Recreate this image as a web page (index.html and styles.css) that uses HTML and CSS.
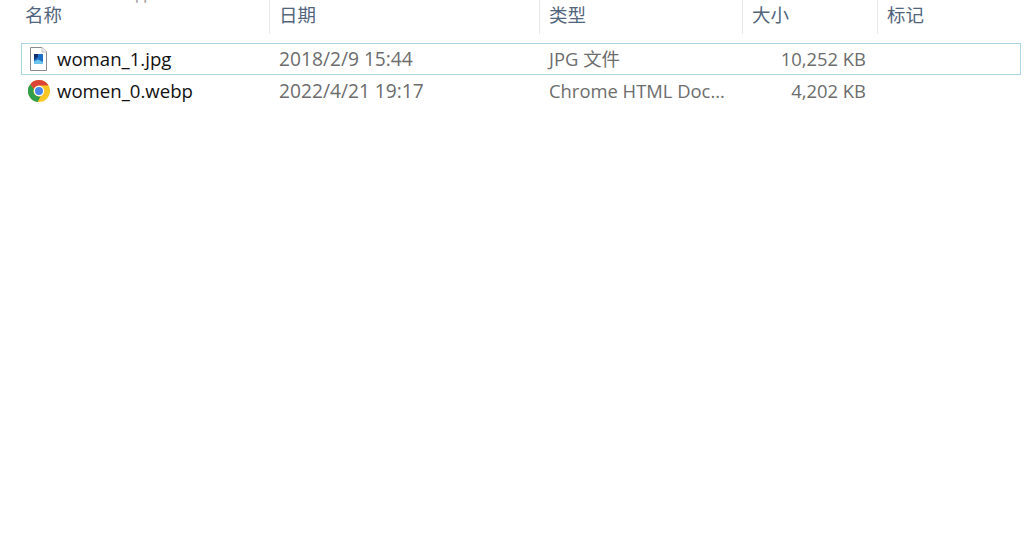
FILE: index.html
```html
<!DOCTYPE html>
<html lang="en">
<head>
    <meta charset="UTF-8">
    <meta name="viewport" content="width=device-width, initial-scale=1.0">
    <title>File list</title>
    <link rel="stylesheet" href="styles.css">
</head>

<body>
    <div class="cut-text">件</div>

    <!-- Column headers -->
    <div class="file-header">
        <div class="head-cell head-name">名称</div>
        <div class="head-cell">日期</div>
        <div class="head-cell">类型</div>
        <div class="head-cell">大小</div>
        <div class="head-cell head-last">标记</div>
    </div>

    <!-- Files -->
    <div class="file-list">
        <div class="file-row selected">
            <div class="name-cell">
                <svg class="file-icon" width="22" height="26" viewBox="0 0 22 26">
                    <path d="M2.5 1.5H14L18.5 6V24.5H2.5Z" fill="#fff" stroke="#8a8a8e"/>
                    <path d="M14 1.5V6H18.5" fill="#f1f1f1" stroke="#c4c4c8"/>
                    <rect x="6" y="8" width="9" height="10" fill="#1c6fc4"/>
                    <path d="M6 8H10V11L6 14Z" fill="#12306f"/>
                    <path d="M6 18V15.5L10 13.5L15 16V18Z" fill="#6cc3ec"/>
                </svg>
                <span>woman_1.jpg</span>
            </div>
            <div class="cell date-cell">2018/2/9 15:44</div>
            <div class="cell type-cell">JPG 文件</div>
            <div class="cell size-cell">10,252 KB</div>
        </div>
        <div class="file-row">
            <div class="name-cell">
                <svg class="chrome-icon" width="22" height="22" viewBox="0 0 22 22">
                    <circle cx="11" cy="11" r="11" fill="#f9c623"/>
                    <path d="M11 0A11 11 0 0 1 20.5 5.5H11A5.5 5.5 0 0 0 5.8 9.2L2.3 4.2A11 11 0 0 1 11 0Z" fill="#dc4437"/>
                    <path d="M2.3 4.2L5.8 9.2A5.5 5.5 0 0 0 12.6 16.3L9.6 21.9A11 11 0 0 1 2.3 4.2Z" fill="#2f9e4c"/>
                    <circle cx="11" cy="11" r="5.2" fill="#fff"/>
                    <circle cx="11" cy="11" r="4" fill="#4a86e8"/>
                </svg>
                <span>women_0.webp</span>
            </div>
            <div class="cell date-cell">2022/4/21 19:17</div>
            <div class="cell type-cell">Chrome HTML Doc...</div>
            <div class="cell size-cell">4,202 KB</div>
        </div>
    </div>
</body>
</html>
```

FILE: styles.css
```css
body, html {
    margin: 0;
    padding: 0;
    font-family: "Open Sans", "Noto Sans CJK SC", sans-serif;
    background-color: #ffffff;
    overflow: hidden;
}

body {
    position: relative;
    height: 538px;
}

.cut-text {
    position: absolute;
    top: -21px;
    left: 133px;
    font-size: 19px;
    color: #999;
}

.file-header {
    display: grid;
    grid-template-columns: 270px 270px 203px 135px 1fr;
    height: 34px;
}

.head-cell {
    padding-left: 9px;
    border-right: 1px solid #e5e9ee;
    font-family: "Noto Sans CJK SC", sans-serif;
    font-size: 18.5px;
    line-height: 29px;
    color: #52657d;
}

.head-name {
    padding-left: 25px;
}

.head-last {
    border-right: none;
}

.file-list {
    margin: 9px 5px 0 21px;
}

.file-row {
    display: grid;
    grid-template-columns: 249px 270px 203px 122px;
    height: 32px;
    box-sizing: border-box;
    border: 1px solid transparent;
    align-items: center;
    font-size: 18.4px;
    white-space: nowrap;
}

.file-row.selected {
    border-color: #a9d8e2;
}

.name-cell {
    display: flex;
    align-items: center;
    gap: 7px;
    padding-left: 6px;
    color: #111111;
}

.name-cell span {
    margin-bottom: 2px;
    font-size: 18.6px;
}

.chrome-icon {
    flex: none;
}

.file-icon {
    flex: none;
    width: 22px;
}

.cell {
    margin-bottom: 2px;
    padding-left: 8px;
    color: #6d6d6d;
}

.date-cell {
    font-size: 19.2px;
}

.size-cell {
    padding: 0;
    text-align: right;
}
```
